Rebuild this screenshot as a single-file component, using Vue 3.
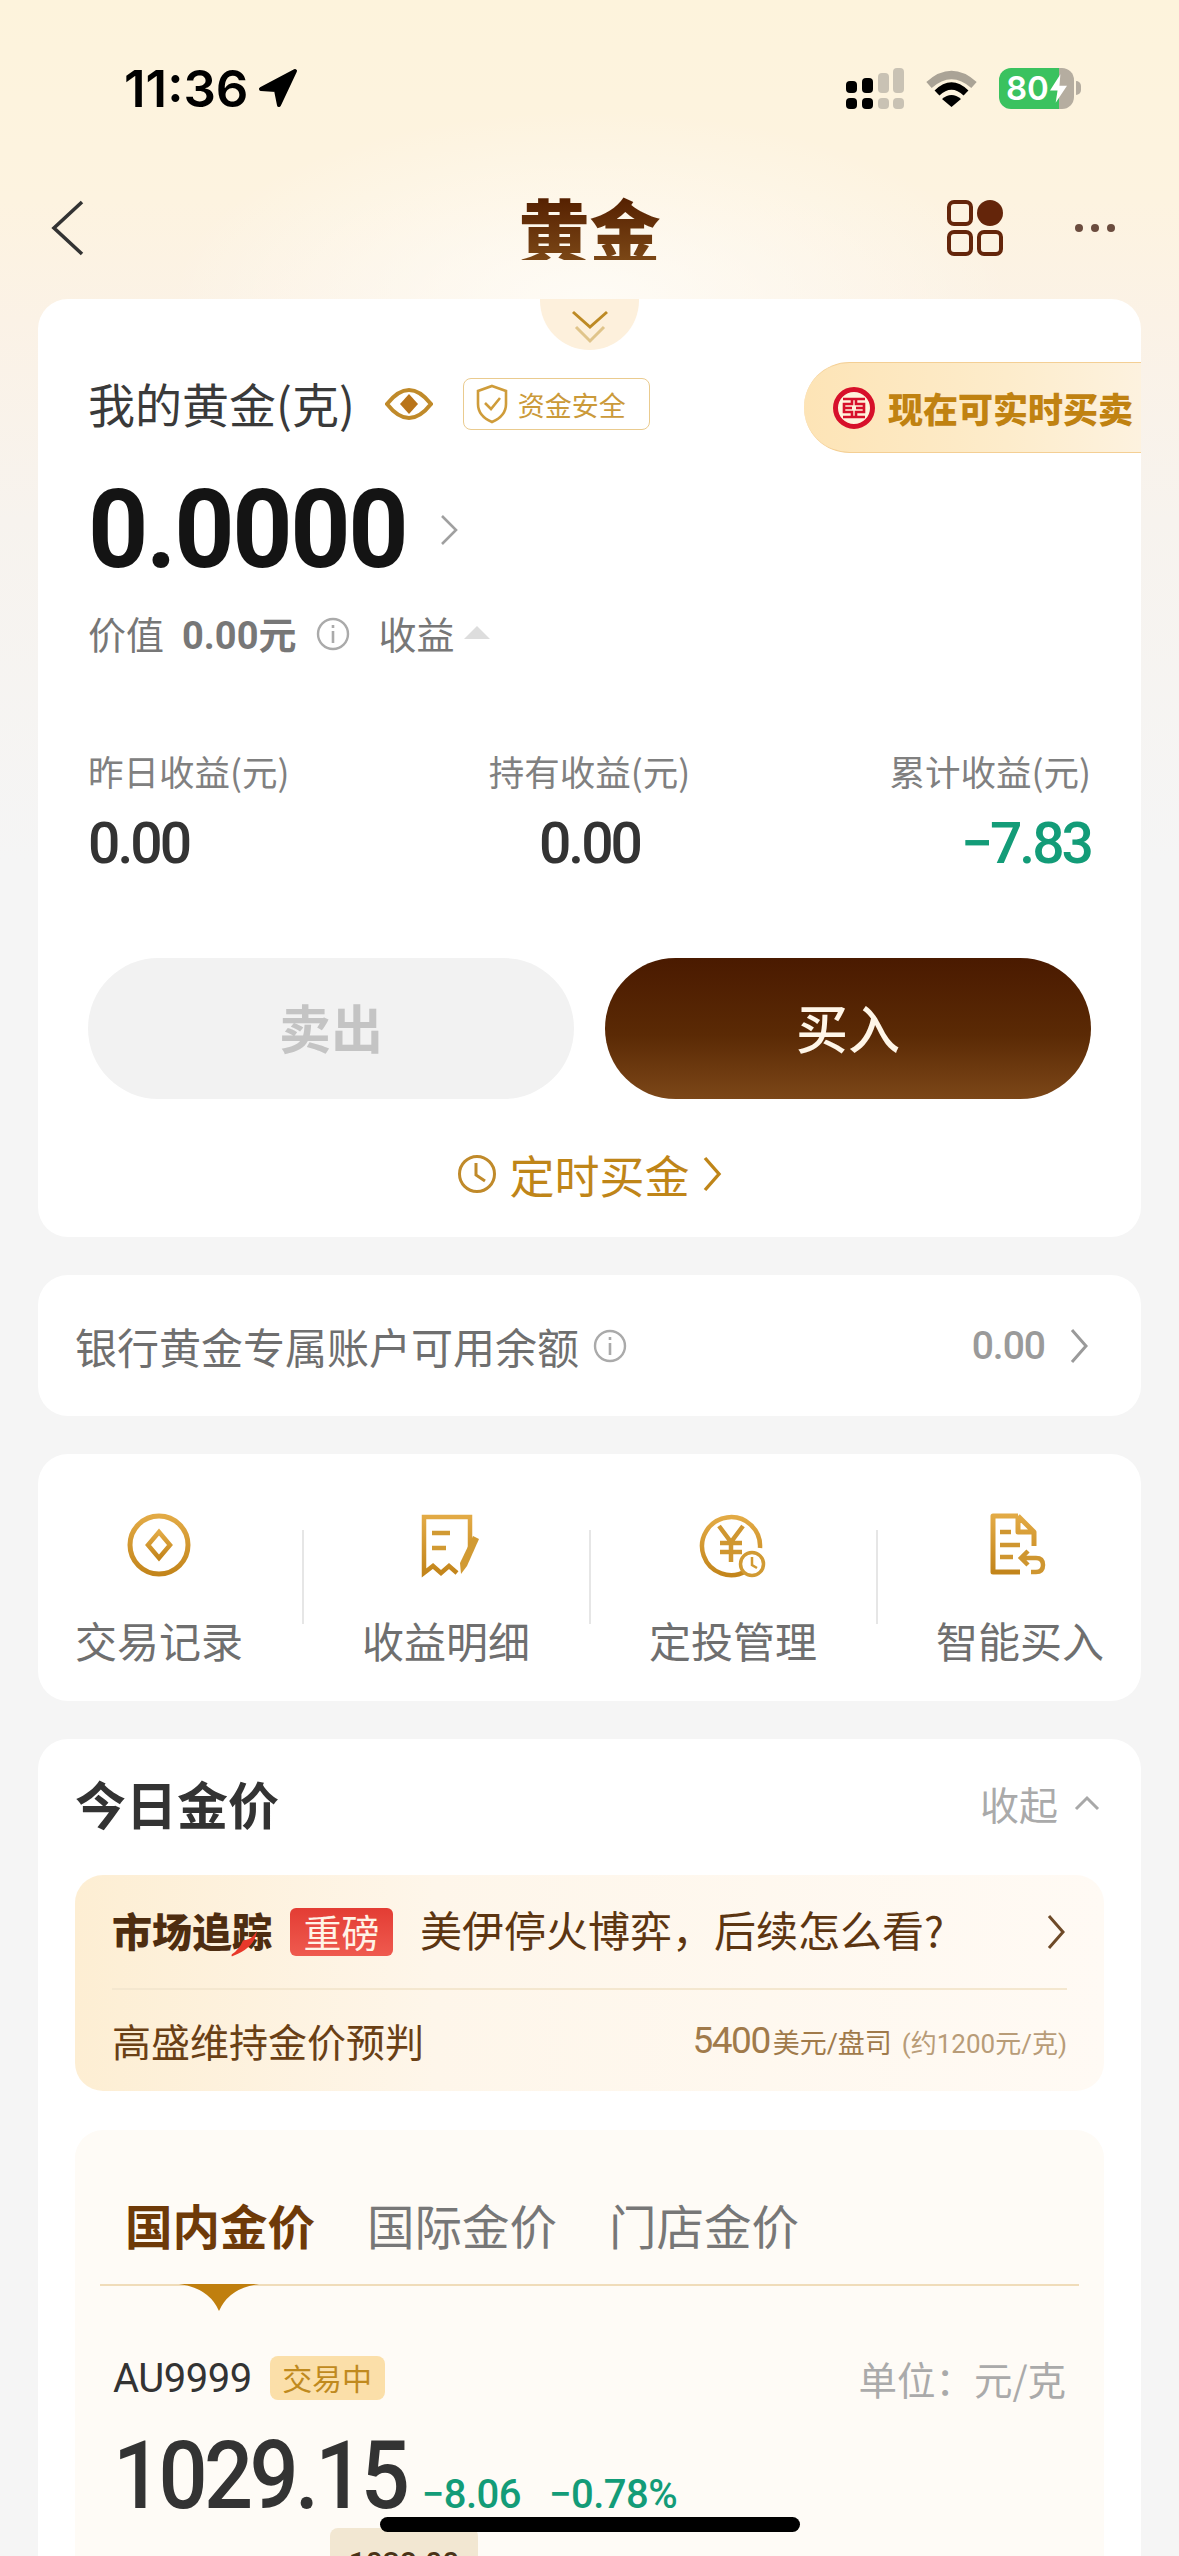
<template>
  <div class="page-root">
    <header class="top">
      <div class="status-bar">
        <div class="clock">
          <span>11:36</span>
          <svg class="loc" viewBox="0 0 40 40"><path d="M37 3 L3 21 L18 22 L21 37 Z" fill="#000" stroke="#000" stroke-width="4" stroke-linejoin="round" /></svg>
        </div>
        <div class="status-icons">
          <svg class="signal" viewBox="0 0 58 41">
            <rect x="0" y="13" width="11" height="12" rx="4" fill="#000" /><rect x="0" y="30" width="11" height="11" rx="4" fill="#000" />
            <rect x="16" y="10" width="11" height="15" rx="4" fill="#000" /><rect x="16" y="30" width="11" height="11" rx="4" fill="#000" />
            <rect x="32" y="5" width="11" height="20" rx="4" fill="#c9c2b4" /><rect x="32" y="30" width="11" height="11" rx="4" fill="#c9c2b4" />
            <rect x="47" y="0" width="11" height="25" rx="4" fill="#c9c2b4" /><rect x="47" y="30" width="11" height="11" rx="4" fill="#c9c2b4" />
          </svg>
          <svg class="wifi" viewBox="0 0 51 37">
            <path d="M3 15 Q25.5 -5 48 15" fill="none" stroke="#aaa396" stroke-width="8" />
            <path d="M11 23 Q25.5 9 40 23" fill="none" stroke="#000" stroke-width="7" />
            <path d="M25.5 37 L16 29 Q25.5 21 35 29 Z" fill="#000" />
          </svg>
          <div class="battery-wrap">
            <div class="battery">
              <span>80</span>
              <svg class="bolt" viewBox="0 0 18 30"><path d="M11 0 L0 17 H8 L6 30 L18 12 H10 Z" fill="#fff" /></svg>
            </div>
            <i class="battery-tip"></i>
          </div>
        </div>
      </div>
      <nav class="nav">
        <svg class="back" viewBox="0 0 34 56"><path d="M32 2 L4 28 L32 54" fill="none" stroke="#333" stroke-width="3.6" /></svg>
        <h1 class="page-title">黄金</h1>
        <div class="nav-right">
          <svg class="apps" viewBox="0 0 56 56">
            <rect x="2" y="2" width="22" height="22" rx="5" fill="none" stroke="#64250a" stroke-width="4" />
            <circle cx="43" cy="13" r="13" fill="#64250a" />
            <rect x="2" y="32" width="22" height="22" rx="5" fill="none" stroke="#64250a" stroke-width="4" />
            <rect x="32" y="32" width="22" height="22" rx="5" fill="none" stroke="#64250a" stroke-width="4" />
          </svg>
          <svg class="more" viewBox="0 0 40 8"><circle cx="4" cy="4" r="4" fill="#6b4c3e" /><circle cx="20" cy="4" r="4" fill="#6b4c3e" /><circle cx="36" cy="4" r="4" fill="#6b4c3e" /></svg>
        </div>
      </nav>
    </header>

    <main class="cards">
      <section class="card holding">
        <div class="notch">
          <svg viewBox="0 0 40 36" class="notch-icon">
            <path d="M3 3 L20 18 L37 3" fill="none" stroke="#bd8a25" stroke-width="3" />
            <path d="M6 18 L20 32 L34 18" fill="none" stroke="#e0c48a" stroke-width="3" />
          </svg>
        </div>
        <div class="promo">
          <svg class="icbc" viewBox="0 0 42 42">
            <circle cx="21" cy="21" r="18.5" fill="#fff3dc" stroke="#d7102a" stroke-width="5" />
            <path d="M10 12 H32 M10 30 H32 M10 21 H19 M23 21 H32 M19 12 V17 H11 V25 H19 V30 M23 12 V17 H31 V25 H23 V30" fill="none" stroke="#d7102a" stroke-width="2.6" />
          </svg>
          <span>现在可实时买卖</span>
        </div>

        <div class="hold-head">
          <span class="hold-title">我的黄金(克)</span>
          <svg class="eye" viewBox="0 0 48 36">
            <path d="M2 18 Q24 -10 46 18 Q24 46 2 18 Z" fill="none" stroke="#c08a2a" stroke-width="4" />
            <path d="M24 8 L33 18 L24 28 L15 18 Z" fill="#b9741a" />
          </svg>
          <span class="safe-badge">
            <svg class="shield" viewBox="0 0 32 40">
              <path d="M16 2 L30 7 V20 Q30 32 16 38 Q2 32 2 20 V7 Z" fill="none" stroke="#cf9c3a" stroke-width="2.6" />
              <path d="M9 19 L15 25 L24 14" fill="none" stroke="#cf9c3a" stroke-width="2.6" />
            </svg>
            资金安全
          </span>
        </div>

        <div class="amount-row">
          <span class="amount">0.0000</span>
          <svg class="chev-thin" viewBox="0 0 18 32"><path d="M2 2 L16 16 L2 30" fill="none" stroke="#a0a0a0" stroke-width="2.6" /></svg>
        </div>

        <div class="value-row">
          <span>价值</span>
          <b class="value-num">0.00元</b>
          <svg class="info" viewBox="0 0 34 34">
            <circle cx="17" cy="17" r="15" fill="none" stroke="#aaa" stroke-width="2.4" />
            <path d="M17 14 V26 M17 8 V11" stroke="#aaa" stroke-width="2.6" />
          </svg>
          <span class="income-label">收益</span>
          <i class="tri-up"></i>
        </div>

        <div class="stats">
          <div v-for="s in stats" :key="s.label" class="stat" :class="s.align">
            <div class="stat-label">{{ s.label }}</div>
            <div class="stat-value" :class="{ down: s.down }">{{ s.value }}</div>
          </div>
        </div>

        <div class="actions">
          <button class="btn sell">卖出</button>
          <button class="btn buy">买入</button>
        </div>

        <div class="schedule">
          <svg class="clock-icon" viewBox="0 0 40 40">
            <circle cx="20" cy="20" r="17.5" fill="none" stroke="#c08a2a" stroke-width="3" />
            <path d="M19 9 V21 L28 27" fill="none" stroke="#c08a2a" stroke-width="3" />
          </svg>
          <span>定时买金</span>
          <svg class="schedule-chev" viewBox="0 0 20 36"><path d="M3 2 L17 18 L3 34" fill="none" stroke="#bf8518" stroke-width="3.4" /></svg>
        </div>
      </section>

      <section class="card balance">
        <span class="balance-label">银行黄金专属账户可用余额</span>
        <svg class="info" viewBox="0 0 34 34">
          <circle cx="17" cy="17" r="15" fill="none" stroke="#aaa" stroke-width="2.4" />
          <path d="M17 14 V26 M17 8 V11" stroke="#aaa" stroke-width="2.6" />
        </svg>
        <span class="balance-num">0.00</span>
        <svg class="balance-chev" viewBox="0 0 20 36"><path d="M3 2 L17 18 L3 34" fill="none" stroke="#9a9a9a" stroke-width="3" /></svg>
      </section>

      <section class="card shortcuts">
        <svg width="0" height="0" class="defs">
          <defs>
            <linearGradient id="goldLine" x1="0" y1="0" x2="0" y2="1">
              <stop offset="0" stop-color="#e2aa45" />
              <stop offset="1" stop-color="#c3851b" />
            </linearGradient>
          </defs>
        </svg>
        <div class="shortcut">
          <svg class="sc-icon" viewBox="0 0 66 66">
            <circle cx="33" cy="33" r="29" fill="none" stroke="url(#goldLine)" stroke-width="5" />
            <path d="M33 20 L44 33 L33 46 L22 33 Z" fill="none" stroke="url(#goldLine)" stroke-width="4.5" />
          </svg>
          <span>交易记录</span>
        </div>
        <i class="sc-divider"></i>
        <div class="shortcut">
          <svg class="sc-icon" viewBox="0 0 66 66">
            <path d="M52 38 V5 H6 V61 L15 54 L23 61 L31 54 L39 61" transform="translate(5 0)" fill="none" stroke="url(#goldLine)" stroke-width="4.5" />
            <path d="M19 21 H37 M19 36 H33" stroke="#d19a33" stroke-width="4.5" />
            <path d="M66 27 L54 54 L48 62 L47 51 L60 24 Z" fill="#d19a33" />
          </svg>
          <span>收益明细</span>
        </div>
        <i class="sc-divider"></i>
        <div class="shortcut">
          <svg class="sc-icon" viewBox="0 0 66 66">
            <path d="M46 59 A29 29 0 1 1 60 36" fill="none" stroke="url(#goldLine)" stroke-width="4.5" />
            <path d="M19 14 L31 30 L43 14 M31 30 V50 M20 31 H42 M20 40 H42" fill="none" stroke="#cf9630" stroke-width="4.5" />
            <circle cx="52" cy="52" r="11.5" fill="#fff" stroke="#d19a33" stroke-width="3.5" />
            <path d="M52 45 V53 L57 56" fill="none" stroke="#d19a33" stroke-width="2.5" />
          </svg>
          <span>定投管理</span>
        </div>
        <i class="sc-divider"></i>
        <div class="shortcut">
          <svg class="sc-icon" viewBox="0 0 66 66">
            <path d="M31 4 H6 V60 H33 M31 4 L47 20 V34 M31 4 V20 H47" fill="none" stroke="url(#goldLine)" stroke-width="5" stroke-linejoin="round" />
            <path d="M13 20 H24 M13 33 H33 M13 45 H26" stroke="#cf9630" stroke-width="4.5" />
            <path d="M35 46 H49 Q56 46 56 53 Q56 60 49 60 H44 M41 39 L34 46 L41 53" fill="none" stroke="#cf9630" stroke-width="4.5" />
          </svg>
          <span>智能买入</span>
        </div>
      </section>

      <section class="card today">
        <div class="today-head">
          <h2>今日金价</h2>
          <span class="collapse">收起
            <svg viewBox="0 0 26 16"><path d="M2 14 L13 3 L24 14" fill="none" stroke="#a8a8a8" stroke-width="3" /></svg>
          </span>
        </div>

        <div class="track">
          <div class="track-top">
            <span class="track-logo">市场追踪
              <svg class="swoosh" viewBox="0 0 30 30"><path d="M29 2 Q27 20 3 29 Q1 30 2 27 Q10 22 14 12 Q22 13 29 2 Z" fill="#e8382a" /></svg>
            </span>
            <span class="track-tag">重磅</span>
            <span class="track-title">美伊停火博弈，后续怎么看?</span>
            <svg class="track-chev" viewBox="0 0 20 36"><path d="M3 2 L17 18 L3 34" fill="none" stroke="#6e4a28" stroke-width="3" /></svg>
          </div>
          <div class="track-bottom">
            <span class="track-sub">高盛维持金价预判</span>
            <span class="track-num">5400<small>美元/盘司</small><em>(约1200元/克)</em></span>
          </div>
        </div>

        <div class="price-box">
          <div class="tabs">
            <span v-for="(t, i) in tabs" :key="t" class="tab" :class="{ active: i === 0 }">{{ t }}</span>
            <svg class="tab-mark" viewBox="0 0 80 27"><path d="M0 0 H80 Q50 4 40 27 Q30 4 0 0 Z" fill="#c07f0e" /></svg>
          </div>
          <div class="au-row">
            <span class="au-name">AU9999</span>
            <span class="au-tag">交易中</span>
            <span class="au-unit">单位：元/克</span>
          </div>
          <div class="price-row">
            <span class="price">1029.15</span>
            <span class="change">−8.06</span>
            <span class="change">−0.78%</span>
          </div>
          <div class="chip">1038.00</div>
        </div>
      </section>
    </main>

    <div class="home-bar"></div>
  </div>
</template>

<script setup>
const stats = [
  { label: '昨日收益(元)', value: '0.00', align: 'left' },
  { label: '持有收益(元)', value: '0.00', align: 'center' },
  { label: '累计收益(元)', value: '−7.83', align: 'right', down: true }
]

const tabs = ['国内金价', '国际金价', '门店金价']
</script>

<style>
html, body { margin: 0; padding: 0; background: #f5f5f5; }
</style>

<style scoped>
.page-root {
  position: relative;
  height: 2556px;
  overflow: hidden;
  font-family: "Noto Sans CJK SC", "Noto Sans", sans-serif;
  color: #333;
  background:
    radial-gradient(ellipse 420px 190px at 590px 300px, rgba(255,253,248,0.85), rgba(255,253,248,0) 100%),
    linear-gradient(180deg, #fdf3dc 0, #fdf3e0 200px, #fbf2e6 320px, #f7f3ee 520px, #f5f5f5 860px);
}

/* status + nav */
.top { padding-top: 64px; height: 235px; }
.status-bar { display: flex; justify-content: space-between; align-items: center; height: 48px; padding: 0 98px 0 124px; }
.clock { display: flex; align-items: center; gap: 10px; font-family: Inter, sans-serif; font-weight: 600; font-size: 51px; color: #000; }
.loc { width: 40px; height: 40px; }
.status-icons { display: flex; align-items: center; }
.signal { width: 58px; height: 41px; }
.wifi { width: 51px; height: 37px; margin-left: 22px; }
.battery-wrap { display: flex; align-items: center; margin-left: 22px; }
.battery {
  width: 75px;
  height: 41px;
  border-radius: 12px;
  background: linear-gradient(90deg, #3ac25f 80%, #b5ada0 80%);
  color: #fff;
  font-family: Inter, sans-serif;
  font-weight: 600;
  font-size: 33px;
  line-height: 41px;
  display: flex;
  align-items: center;
  padding-left: 7px;
  box-sizing: border-box;
}
.bolt { width: 17px; height: 29px; margin-left: 1px; }
.battery-tip { display: block; width: 5px; height: 14px; margin-left: 2px; background: #b5ada0; border-radius: 0 5px 5px 0; }

.nav { display: grid; grid-template-columns: 1fr auto 1fr; align-items: center; height: 64px; margin-top: 84px; padding: 0 64px; }
.back { width: 34px; height: 56px; margin-left: -14px; }
.page-title {
  margin: 0;
  font-size: 71px;
  font-weight: 900;
  line-height: 64px;
  background: linear-gradient(180deg, #541f00, #7b4716);
  -webkit-background-clip: text;
  background-clip: text;
  color: transparent;
}
.nav-right { display: flex; justify-content: flex-end; align-items: center; gap: 72px; }
.apps { width: 56px; height: 56px; }
.more { width: 40px; height: 8px; }

/* cards */
.cards { display: flex; flex-direction: column; gap: 38px; padding: 0 38px; }
.card { position: relative; background: #fff; border-radius: 30px; }
.holding { padding: 79px 50px 38px; height: 938px; box-sizing: border-box; }
.notch { position: absolute; top: 0; left: 502px; width: 99px; height: 51px; border-radius: 0 0 50px 50px; background: #fdf0dc; display: flex; justify-content: center; padding-top: 10px; box-sizing: border-box; }
.notch-icon { width: 40px; height: 36px; }
.promo {
  position: absolute;
  top: 63px;
  right: 0;
  width: 337px;
  height: 91px;
  box-sizing: border-box;
  border-radius: 46px 0 0 46px;
  border-top: 1px solid #f4cf94;
  border-bottom: 1px solid #f4cf94;
  background: linear-gradient(90deg, #fde4b6, #fdeccb 60%, #fdf2df);
  display: flex;
  align-items: center;
  padding-left: 29px;
  color: #c08211;
  font-weight: 900;
  font-size: 35px;
  white-space: nowrap;
}
.icbc { width: 42px; height: 42px; margin-right: 13px; flex: none; }

.hold-head { display: flex; align-items: center; height: 52px; }
.hold-title { font-size: 47px; color: #3a3a3a; margin-top: -4px; }
.eye { width: 48px; height: 36px; margin-left: 30px; }
.safe-badge { display: flex; align-items: center; gap: 10px; height: 52px; margin-left: 30px; padding: 0 23px 0 12px; box-sizing: border-box; border: 1px solid #eacb8f; border-radius: 8px; color: #cb9a3a; font-size: 27px; }
.shield { width: 32px; height: 40px; }

.amount-row { display: flex; align-items: center; height: 120px; margin-top: 40px; }
.amount { display: inline-block; font-family: Roboto, sans-serif; font-weight: 700; font-size: 110px; line-height: 120px; color: #141414; letter-spacing: -2.5px; transform: scaleX(0.957); transform-origin: left center; margin-right: -14px; }
.chev-thin { width: 18px; height: 32px; margin-left: 34px; }

.value-row { display: flex; align-items: center; height: 50px; margin-top: 17px; font-size: 38px; color: #777; }
.value-num { margin-left: 18px; font-family: Roboto, "Noto Sans CJK SC", sans-serif; font-weight: 700; font-size: 38px; color: #777; }
.info { width: 34px; height: 34px; flex: none; }
.value-row .info { margin-left: 20px; margin-top: 3px; }
.income-label { margin-left: 28px; }
.tri-up { display: block; width: 0; height: 0; margin-left: 10px; border-left: 13px solid transparent; border-right: 13px solid transparent; border-bottom: 13px solid #ddd; }

.stats { display: grid; grid-template-columns: 1fr 1fr 1fr; margin-top: 96px; }
.stat.center { text-align: center; }
.stat.right { text-align: right; }
.stat.left { text-align: left; }
.stat-label { font-size: 35.5px; line-height: 40px; color: #808080; margin-top: -2px; white-space: nowrap; }
.stat-value { margin-top: 23px; font-family: Roboto, sans-serif; font-weight: 500; font-size: 57px; line-height: 60px; color: #333; letter-spacing: -3px; }
.stat-value.down { color: #139c78; }

.actions { display: flex; gap: 31px; margin-top: 84px; }
.btn { flex: 1; height: 141px; border: none; border-radius: 71px; font-family: inherit; font-size: 52px; padding: 0 0 5px; }
.btn.sell { background: #f2f2f2; color: #c4c4c4; font-weight: 700; }
.btn.buy { background: linear-gradient(180deg, #4a1a00, #5b2a05 55%, #7c4718); color: #fff6e8; font-weight: 500; }

.schedule { display: flex; justify-content: center; align-items: center; height: 50px; margin-top: 50px; color: #bf8518; font-size: 45px; }
.clock-icon { width: 40px; height: 40px; margin-right: 12px; }
.schedule-chev { width: 20px; height: 36px; margin-left: 12px; }

.balance { display: flex; align-items: center; height: 141px; padding: 0 52px 0 37px; }
.balance-label { font-size: 42px; color: #6f6f6f; white-space: nowrap; }
.balance .info { margin-left: 14px; }
.balance-num { margin-left: auto; font-family: Roboto, sans-serif; font-weight: 500; font-size: 39px; letter-spacing: -1px; color: #9a9a9a; }
.balance-chev { width: 20px; height: 36px; margin-left: 24px; }

.shortcuts { display: flex; justify-content: space-between; height: 247px; padding: 58px 37px 0; box-sizing: border-box; }
.defs { position: absolute; }
.shortcut { display: flex; flex-direction: column; align-items: center; width: 168px; }
.shortcut span { margin-top: 37px; font-size: 42px; line-height: 50px; color: #6f6f6f; white-space: nowrap; }
.sc-icon { width: 66px; height: 66px; overflow: visible; }
.sc-divider { display: block; width: 2px; height: 94px; margin-top: 18px; background: #e6e6e6; }

.today { padding: 34px 37px 0; height: 900px; box-sizing: border-box; border-radius: 30px 30px 0 0; }
.today-head { display: flex; justify-content: space-between; align-items: center; height: 60px; }
.today-head h2 { margin: 0; font-size: 51px; font-weight: 700; color: #333; }
.collapse { display: flex; align-items: center; gap: 16px; font-size: 39px; color: #aaa; padding-right: 4px; }
.collapse svg { width: 26px; height: 16px; }

.track { margin-top: 42px; height: 216px; padding: 0 37px; box-sizing: border-box; border-radius: 28px; background: linear-gradient(90deg, #fdeed3, #fef6ea 35%, #fffaf4); }
.track-top { display: flex; align-items: center; height: 113px; border-bottom: 2px solid #f4e7cf; }
.track-logo { position: relative; font-size: 40px; font-weight: 900; color: #4e2d10; white-space: nowrap; margin-top: -4px; }
.swoosh { position: absolute; right: 14px; bottom: 2px; width: 28px; height: 28px; }
.track-tag { margin-left: 18px; width: 103px; height: 48px; border-radius: 6px; background: linear-gradient(180deg, #e33d34, #ef5a4f); color: #fff3e6; font-size: 38px; line-height: 46px; text-align: center; }
.track-title { margin-left: 27px; font-size: 42px; color: #5c3511; white-space: nowrap; margin-top: -6px; }
.track-chev { width: 20px; height: 36px; margin-left: auto; margin-right: 1px; }
.track-bottom { display: flex; justify-content: space-between; align-items: center; height: 101px; }
.track-sub { font-size: 39px; color: #6a4015; margin-top: -2px; }
.track-num { font-family: Roboto, "Noto Sans CJK SC", sans-serif; font-size: 37px; letter-spacing: -1.5px; color: #a07a4a; white-space: nowrap; }
.track-num small { font-size: 27px; letter-spacing: 0; margin-left: 3px; }
.track-num em { font-style: normal; font-size: 26px; letter-spacing: 0; margin-left: 10px; color: #b89c78; }

.price-box { margin-top: 39px; padding-top: 65px; height: 500px; box-sizing: border-box; border-radius: 28px 28px 0 0; background: #fefbf6; }
.tabs { position: relative; display: flex; gap: 52px; height: 91px; margin: 0 25px; padding: 0 25px; box-sizing: border-box; border-bottom: 2px solid #f0dcb9; align-items: flex-start; }
.tab { font-size: 47.5px; line-height: 60px; color: #777; white-space: nowrap; }
.tab.active { color: #6e3a08; font-weight: 700; }
.tab-mark { position: absolute; left: 79px; top: 89px; width: 80px; height: 27px; }
.au-row { display: flex; align-items: center; height: 50px; margin-top: 67px; padding: 0 38px; }
.au-name { font-family: Roboto, sans-serif; font-size: 40px; color: #333; letter-spacing: -0.5px; }
.au-tag { margin-left: 18px; width: 115px; height: 44px; border-radius: 8px; background: #fbdfa9; color: #c08a1e; font-size: 30px; line-height: 42px; text-align: center; }
.au-unit { margin-left: auto; font-size: 38.5px; color: #aaa; }
.price-row { display: flex; align-items: baseline; height: 100px; margin-top: 23px; padding: 0 38px; font-family: Roboto, sans-serif; }
.price { display: inline-block; font-size: 94px; line-height: 100px; font-weight: 500; color: #333; letter-spacing: -4px; transform: scaleX(0.92); transform-origin: left center; margin-right: -25px; }
.change { margin-left: 15px; font-size: 40px; color: #139c78; font-weight: 500; letter-spacing: -0.5px; }
.change + .change { margin-left: 28px; }
.chip { width: 148px; height: 50px; margin: 2px 0 0 255px; border-radius: 8px 8px 0 0; background: #f2e7d2; color: #4a3317; font-family: Roboto, sans-serif; font-weight: 500; font-size: 30px; line-height: 50px; padding-top: 10px; text-align: center; }

.home-bar { position: absolute; left: 380px; top: 2517px; width: 420px; height: 15px; border-radius: 8px; background: #000; }
</style>
